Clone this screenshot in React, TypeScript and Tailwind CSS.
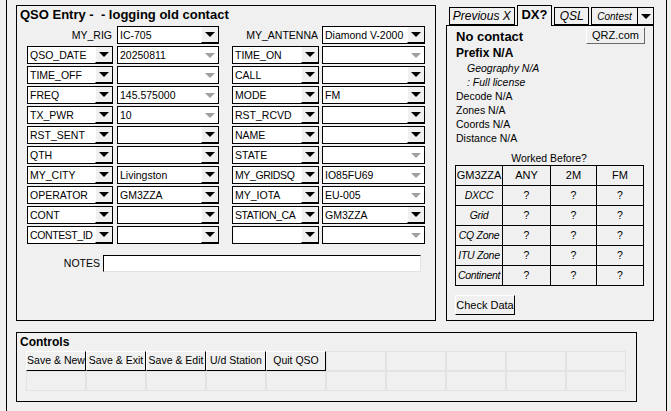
import React from "react";

type Field = { text: string; off?: boolean; tight?: boolean };
type Row = { l: Field; lv: Field; r: Field; rv: Field };

const rows: Row[] = [
  { l: { text: "QSO_DATE" }, lv: { text: "20250811", off: true }, r: { text: "TIME_ON" }, rv: { text: "", off: true } },
  { l: { text: "TIME_OFF" }, lv: { text: "", off: true }, r: { text: "CALL" }, rv: { text: "" } },
  { l: { text: "FREQ" }, lv: { text: "145.575000", off: true }, r: { text: "MODE" }, rv: { text: "FM" } },
  { l: { text: "TX_PWR" }, lv: { text: "10", off: true }, r: { text: "RST_RCVD" }, rv: { text: "" } },
  { l: { text: "RST_SENT" }, lv: { text: "" }, r: { text: "NAME" }, rv: { text: "" } },
  { l: { text: "QTH" }, lv: { text: "" }, r: { text: "STATE" }, rv: { text: "", off: true } },
  { l: { text: "MY_CITY" }, lv: { text: "Livingston" }, r: { text: "MY_GRIDSQ", tight: true }, rv: { text: "IO85FU69", off: true } },
  { l: { text: "OPERATOR" }, lv: { text: "GM3ZZA" }, r: { text: "MY_IOTA" }, rv: { text: "EU-005", off: true } },
  { l: { text: "CONT" }, lv: { text: "" }, r: { text: "STATION_CA", tight: true }, rv: { text: "GM3ZZA" } },
  { l: { text: "CONTEST_ID", tight: true }, lv: { text: "" }, r: { text: "" }, rv: { text: "", off: true } },
];

const worked = ["DXCC", "Grid", "CQ Zone", "ITU Zone", "Continent"];
const buttons = ["Save & New", "Save & Exit", "Save & Edit", "U/d Station", "Quit QSO", "", "", "", "", ""];

function Arrow({ off }: { off?: boolean }) {
  if (off) {
    return (
      <div className="w-[17px] shrink-0 h-full flex items-center justify-center">
        <div className="w-0 h-0 border-x-[5px] border-x-transparent border-t-[5px] border-t-[#a0a0a0]" />
      </div>
    );
  }
  return (
    <div className="w-[17px] shrink-0 h-full flex items-center justify-center bg-[#f0f0f0] border-l border-l-white border-b border-b-black">
      <div className="w-0 h-0 border-x-[5px] border-x-transparent border-t-[5px] border-t-black" />
    </div>
  );
}

function Combo({ f, w }: { f: Field; w: string }) {
  return (
    <div className={`flex h-[18px] border border-black bg-white ${w}`}>
      <div
        className={`flex-1 min-w-0 pl-[2px] leading-[16px] overflow-hidden whitespace-nowrap ${
          f.tight ? "tracking-[-0.4px]" : ""
        }`}
      >
        {f.text}
      </div>
      <Arrow off={f.off} />
    </div>
  );
}

function Tab({ children, w, active }: { children: React.ReactNode; w: string; active?: boolean }) {
  return (
    <div
      className={`${w} border border-black flex items-center justify-center bg-[#f0f0f0] ${
        active ? "h-[21px] border-b-0 -mb-px relative z-10" : "h-[18px]"
      }`}
    >
      {children}
    </div>
  );
}

export default function App() {
  return (
    <div className="w-[671px] h-[411px] bg-[#f0f0f0] flex overflow-hidden text-[10.5px] text-black font-['Liberation_Sans',Arial,sans-serif]">
      <div className="w-[6px] shrink-0" />
      <div className="w-[661px] shrink-0 h-full border-x border-black flex flex-col">
        <div className="flex mt-[5px]">
          {/* QSO Entry */}
          <div className="ml-[9px] w-[420px] h-[316px] border border-black flex flex-col">
            <div className="h-[20px] pl-[3px] text-[13px] font-bold leading-[18px]">QSO Entry -&nbsp; - logging old contact</div>
            <div className="flex flex-col gap-[2px] pl-[10px]">
              <div className="flex h-[18px]">
                <div className="w-[86px] text-right leading-[18px] pr-[1px]">MY_RIG</div>
                <div className="w-[4px]" />
                <Combo f={{ text: "IC-705" }} w="w-[102px]" />
                <div className="w-[13px]" />
                <div className="w-[87px] text-right leading-[18px] pr-[1px] whitespace-nowrap">MY_ANTENNA</div>
                <div className="w-[3px]" />
                <Combo f={{ text: "Diamond V-2000" }} w="w-[103px]" />
              </div>
              {rows.map((r, i) => (
                <div key={i} className="flex h-[18px]">
                  <Combo f={r.l} w="w-[86px]" />
                  <div className="w-[4px]" />
                  <Combo f={r.lv} w="w-[102px]" />
                  <div className="w-[13px]" />
                  <Combo f={r.r} w="w-[87px]" />
                  <div className="w-[3px]" />
                  <Combo f={r.rv} w="w-[103px]" />
                </div>
              ))}
            </div>
            <div className="flex mt-[11px] h-[17px]">
              <div className="w-[86px] text-right leading-[17px] pr-[3px]">NOTES</div>
              <div className="w-[318px] h-[17px] bg-white border border-t-black border-l-black border-r-[#e3e3e3] border-b-[#e3e3e3]" />
            </div>
          </div>

          {/* DX panel */}
          <div className="ml-[10px] w-[208px] flex flex-col">
            <div className="h-[20px] flex items-end pl-[3px] gap-[2px]">
              <Tab w="w-[68px]">
                <span className="italic text-[12px]">Previous X</span>
              </Tab>
              <Tab w="w-[37px]" active>
                <span className="font-bold text-[13px] -mt-[2px]">DX?</span>
              </Tab>
              <Tab w="w-[36px]">
                <span className="italic text-[12px]">QSL</span>
              </Tab>
              <div className="flex">
                <Tab w="w-[47px]">
                  <span className="italic text-[10px]">Contest</span>
                </Tab>
                <div className="w-[16px] h-[18px] border border-l-0 border-black bg-[#f0f0f0] flex items-center justify-center">
                  <div className="w-0 h-0 border-x-[5px] border-x-transparent border-t-[5px] border-t-black" />
                </div>
              </div>
            </div>
            <div className="h-[296px] border border-black flex flex-col pl-[9px]">
              <div className="flex">
                <div className="flex flex-col">
                  <div className="text-[13px] font-bold leading-[16px] mt-[3px]">No contact</div>
                  <div className="text-[12px] font-bold leading-[16px]">Prefix N/A</div>
                </div>
                <div className="ml-auto mr-[8px] mt-[1px] w-[59px] h-[17px] bg-[#f0f0f0] border border-t-white border-l-white border-b-[#696969] border-r-[#696969] flex items-center justify-center text-[11px]">
                  QRZ.com
                </div>
              </div>
              <div className="pl-[11px] italic leading-[14px]">
                <div>Geography N/A</div>
                <div>: Full license</div>
              </div>
              <div className="leading-[14px]">
                <div>Decode N/A</div>
                <div>Zones N/A</div>
                <div>Coords N/A</div>
                <div>Distance N/A</div>
              </div>
              <div className="w-[188px] -ml-[1px] text-center mt-[7px] leading-[13px]">Worked Before?</div>
              <table className="w-[188px] -ml-[1px] border-collapse table-fixed">
                <colgroup>
                  <col className="w-[47px]" />
                  <col className="w-[48px]" />
                  <col className="w-[46px]" />
                  <col className="w-[47px]" />
                </colgroup>
                <tbody>
                  <tr className="h-[20px]">
                    <td className="border border-black text-center p-0 text-[11px]">GM3ZZA</td>
                    <td className="border border-black text-center p-0 text-[11px]">ANY</td>
                    <td className="border border-black text-center p-0 text-[11px]">2M</td>
                    <td className="border border-black text-center p-0 text-[11px]">FM</td>
                  </tr>
                  {worked.map((w) => (
                    <tr key={w} className="h-[20px]">
                      <td className="border border-black text-center p-0 italic whitespace-nowrap overflow-hidden tracking-[-0.3px]">{w}</td>
                      <td className="border border-black text-center p-0">?</td>
                      <td className="border border-black text-center p-0">?</td>
                      <td className="border border-black text-center p-0">?</td>
                    </tr>
                  ))}
                </tbody>
              </table>
              <div className="mt-[9px] -ml-[1px] w-[60px] h-[20px] bg-[#f0f0f0] border border-t-white border-l-white border-b-black border-r-black flex items-center justify-center text-[11px] whitespace-nowrap">
                Check Data
              </div>
            </div>
          </div>
        </div>

        {/* Controls */}
        <div className="mt-[11px] ml-[9px] w-[621px] h-[70px] border border-black flex flex-col">
          <div className="pl-[3px] text-[12px] font-bold leading-[18px]">Controls</div>
          <div className="ml-[9px] grid grid-cols-10 w-[600px]">
            {buttons.map((b, i) => (
              <div
                key={i}
                className={`h-[20px] flex items-center justify-center whitespace-nowrap overflow-hidden text-[10.5px] ${
                  b ? "border border-t-white border-l-white border-b-black border-r-black" : "border border-[#e3e3e3]"
                }`}
              >
                {b}
              </div>
            ))}
            {buttons.map((_, i) => (
              <div key={"e" + i} className="h-[20px] border border-[#e3e3e3]" />
            ))}
          </div>
        </div>
      </div>
    </div>
  );
}
